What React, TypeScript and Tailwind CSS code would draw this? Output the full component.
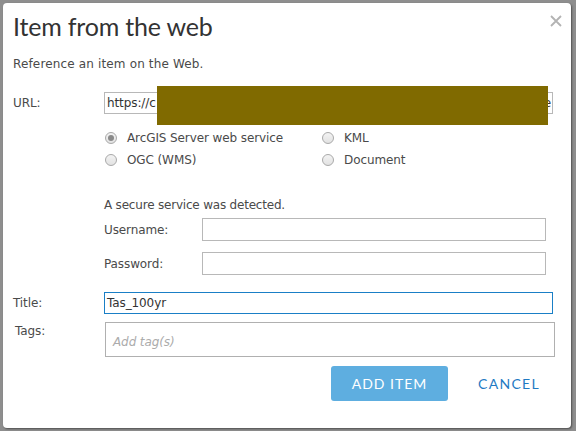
import React from "react";

const body = "font-['DejaVu_Sans',Verdana,sans-serif] text-[12px] tracking-[-0.1px] text-[#4a4a4a]";
const heading = "font-['Lato','Open_Sans',sans-serif]";

function Radio({ checked, label }: { checked?: boolean; label: string }) {
  return (
    <label className="flex items-center gap-[10px] h-[22px]">
      <span className="w-[12px] h-[12px] rounded-full border border-[#a9a9a9] bg-gradient-to-b from-[#f3f3f3] to-[#e2e2e2] flex items-center justify-center">
        {checked && <span className="w-[6px] h-[6px] rounded-full bg-[#8a8a8a]" />}
      </span>
      <span>{label}</span>
    </label>
  );
}

function CloseIcon() {
  return (
    <svg width="12" height="12" viewBox="0 0 12 12" className="block">
      <path d="M1 1 L11 11 M11 1 L1 11" stroke="#b3b3b3" strokeWidth="1.8" />
    </svg>
  );
}

export default function App() {
  return (
    <div className="w-[576px] h-[431px] bg-[#8e8e8e] pt-[3px] pl-[3px] overflow-hidden">
      <div className={`w-[568px] h-[425px] bg-white rounded-[4px] shadow-[1px_1px_2px_rgba(0,0,0,0.45)] pl-[10px] ${body}`}>
        {/* header */}
        <div className="flex justify-between items-start h-[44px]">
          <h1 className={`${heading} text-[25px] leading-[30px] text-[#333] pt-[8px] tracking-[-0.2px]`}>Item from the web</h1>
          <button className="mt-[12px] mr-[9px]">
            <CloseIcon />
          </button>
        </div>

        <p className="mt-[10px] leading-[14px] tracking-[0.15px]">Reference an item on the Web.</p>

        {/* URL */}
        <div className="flex items-center mt-[21px] h-[22px]">
          <span className="w-[91px]">URL:</span>
          <div className="relative w-[449px] h-[22px] border border-[#b8b8b8] px-[2px] flex items-center overflow-visible">
            <span className="text-[#333] whitespace-nowrap overflow-hidden">https://c</span>
            <span className="absolute right-[1px] text-[#333]">e</span>
            <div className="absolute left-[52px] top-[-7px] w-[391px] h-[39px] bg-[#806a00]" />
          </div>
        </div>

        {/* service type */}
        <div className="ml-[92px] mt-[13px] grid grid-cols-[217px_1fr]">
          <Radio checked label="ArcGIS Server web service" />
          <Radio label="KML" />
          <Radio label="OGC (WMS)" />
          <Radio label="Document" />
        </div>

        {/* credentials */}
        <div className="ml-[91px] mt-[27px]">
          <p className="leading-[14px] tracking-[-0.2px]">A secure service was detected.</p>
          <div className="flex items-center mt-[6px]">
            <span className="w-[98px]">Username:</span>
            <div className="w-[344px] h-[23px] border border-[#b8b8b8]" />
          </div>
          <div className="flex items-center mt-[11px]">
            <span className="w-[98px]">Password:</span>
            <div className="w-[344px] h-[23px] border border-[#b8b8b8]" />
          </div>
        </div>

        {/* title */}
        <div className="flex items-center mt-[17px]">
          <span className="w-[91px]">Title:</span>
          <div className="w-[449px] h-[22px] border border-[#1a7fc6] px-[2px] flex items-center text-[#333]">Tas_100yr</div>
        </div>

        {/* tags */}
        <div className="flex mt-[8px]">
          <span className="w-[92px] pl-[2px]">Tags:</span>
          <div className="w-[450px] h-[35px] border border-[#b0b0b0] pl-[7px] pt-[5px] flex items-center italic text-[#ababab]">Add tag(s)</div>
        </div>

        {/* actions */}
        <div className={`flex justify-end items-center mt-[9px] mr-[31px] ${heading}`}>
          <button className="w-[117px] h-[35px] rounded-[3px] bg-[#5eaee0] text-white text-[14px] tracking-[1px]">ADD ITEM</button>
          <button className="ml-[30px] text-[#1f7ac3] text-[14px] tracking-[1.3px]">CANCEL</button>
        </div>
      </div>
    </div>
  );
}
